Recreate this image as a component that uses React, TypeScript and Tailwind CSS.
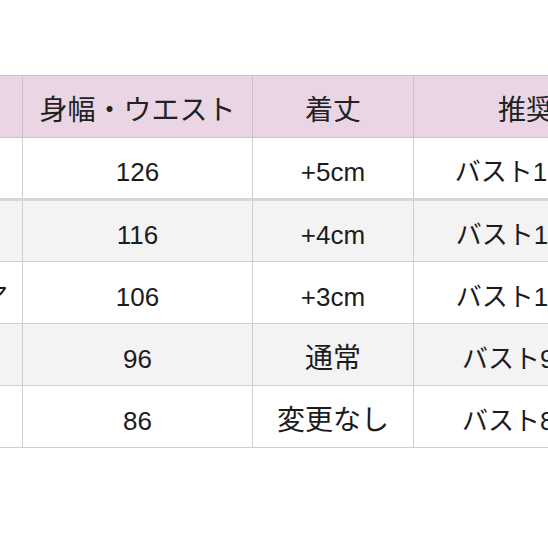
const rows = [
  { size: "4L", width: "126", length: "+5cm", rec: "バスト120〜130cm", bg: "bg-white" },
  { size: "3L", width: "116", length: "+4cm", rec: "バスト110〜120cm", bg: "bg-[#f3f3f3]" },
  { size: "フリーア", width: "106", length: "+3cm", rec: "バスト100〜110cm", bg: "bg-white" },
  { size: "L", width: "96", length: "通常", rec: "バスト90〜100cm", bg: "bg-[#f3f3f3]" },
  { size: "M", width: "86", length: "変更なし", rec: "バスト80〜100cm", bg: "bg-white" },
];

const isCjk = (s: string) => /^[^\x00-\x7f]+$/.test(s);

export default function App() {
  return (
    <div
      className="w-[548px] h-[548px] overflow-hidden bg-white pt-[75px] text-[#1c1c1c]"
      style={{ fontFamily: '"Liberation Sans", "Noto Sans CJK JP", sans-serif' }}
    >
      <table className="table-fixed border-collapse ml-[-178px] w-[899px]">
        <colgroup>
          <col className="w-[200px]" />
          <col className="w-[230px]" />
          <col className="w-[161px]" />
          <col className="w-[308px]" />
        </colgroup>
        <thead>
          <tr className="bg-[#ead5e5] h-[62px]">
            <th className="border border-[#cbc1c8] font-normal text-[28px] leading-none pt-[8px] whitespace-nowrap">サイズ</th>
            <th className="border border-[#cbc1c8] font-normal text-[28px] leading-none pt-[8px] whitespace-nowrap text-[#222]">身幅・ウエスト</th>
            <th className="border border-[#cbc1c8] font-normal text-[28px] leading-none pt-[8px] whitespace-nowrap text-[#222]">着丈</th>
            <th className="border border-[#cbc1c8] font-normal text-[28px] leading-none pt-[8px] whitespace-nowrap text-[#222]">推奨サイズ</th>
          </tr>
        </thead>
        <tbody>
          {rows.map((r, i) => (
            <tr
              key={r.width}
              className={`${r.bg} h-[62px] ${i === 0 ? "border-b-[3px] border-b-[#d6d6d6]" : ""}`}
            >
              <td
                className={`border border-[#cfcfcf] text-[26px] leading-none pt-[8px] whitespace-nowrap ${
                  i === 2 ? "text-right pr-[14px]" : "text-center"
                }`}
              >
                {r.size}
              </td>
              <td className="border border-[#cfcfcf] text-[26px] leading-none pt-[8px] text-center">{r.width}</td>
              <td
                className={`border border-[#cfcfcf] leading-none pt-[8px] text-center whitespace-nowrap ${
                  isCjk(r.length) ? "text-[28px]" : "text-[26px]"
                }`}
              >
                {r.length}
              </td>
              <td className="border border-[#cfcfcf] text-[26px] leading-none pt-[8px] text-center whitespace-nowrap">
                {r.rec}
              </td>
            </tr>
          ))}
        </tbody>
      </table>
    </div>
  );
}
